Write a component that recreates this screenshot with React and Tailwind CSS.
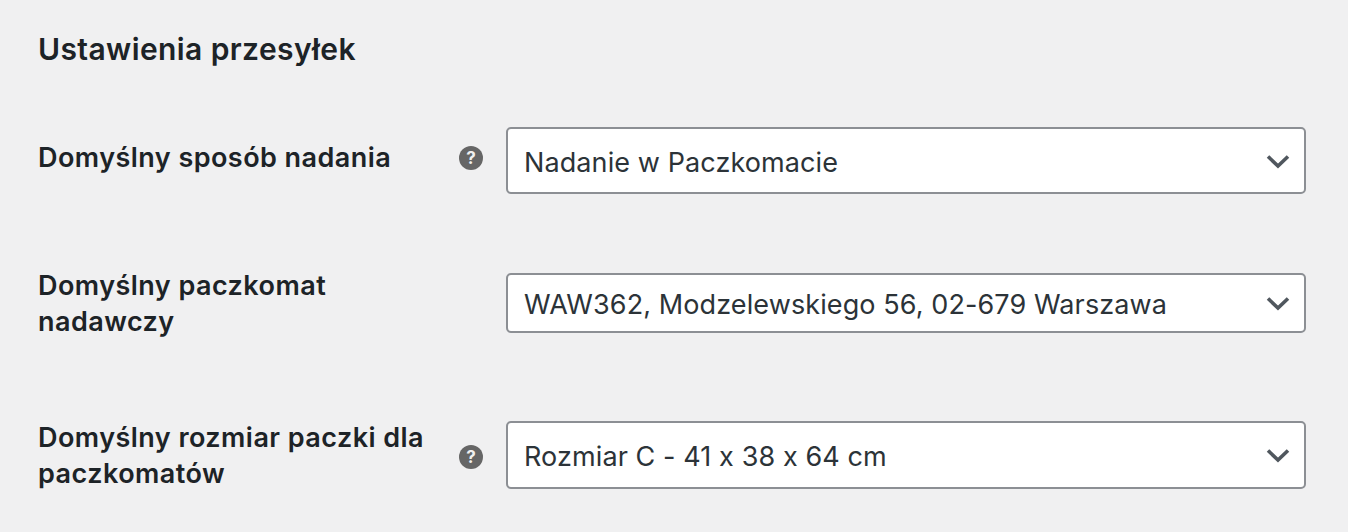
const rows = [
  {
    label: ['Domyślny sposób nadania'],
    help: true,
    value: 'Nadanie w Paczkomacie',
    rowClass: 'mt-[59px]',
    labelClass: 'mt-[13px]',
    helpClass: 'mt-[19px]',
    selectClass: 'h-[67px]',
  },
  {
    label: ['Domyślny paczkomat', 'nadawczy'],
    help: false,
    value: 'WAW362, Modzelewskiego 56, 02-679 Warszawa',
    rowClass: 'mt-[79px]',
    labelClass: '-mt-[5px]',
    helpClass: '',
    selectClass: 'h-[60px]',
  },
  {
    label: ['Domyślny rozmiar paczki dla', 'paczkomatów'],
    help: true,
    value: 'Rozmiar C - 41 x 38 x 64 cm',
    rowClass: 'mt-[81px]',
    labelClass: '-mt-px',
    helpClass: 'mt-[24px]',
    selectClass: 'h-[68px]',
  },
];

function HelpIcon({ className }) {
  return (
    <span className={`flex h-6 w-6 items-center justify-center rounded-full bg-[#666666] text-[17px] leading-none font-bold text-[#f0f0f0] ${className}`}>
      ?
    </span>
  );
}

function Chevron() {
  return (
    <svg
      className="absolute top-1/2 right-[16px] -translate-y-1/2"
      width="24"
      height="16"
      viewBox="0 0 24 16"
      fill="none"
      stroke="#50575e"
      strokeWidth="3.6"
    >
      <path d="M2 3.5 L12 13 L22 3.5" />
    </svg>
  );
}

export default function App() {
  return (
    <div className="h-[532px] w-[1348px] overflow-hidden bg-[#f0f0f1] pt-[30px] pl-[38px] font-['Inter',sans-serif] text-[#1d2327] [font-feature-settings:'calt'_0]">
      <h2 className="text-[30px] leading-[38px] font-semibold tracking-[0.4px]">Ustawienia przesyłek</h2>
      {rows.map((row) => (
        <div key={row.value} className={`flex items-start ${row.rowClass}`}>
          <div className="flex w-[468px] shrink-0 items-start">
            <div className={`w-[421px] text-[27px] leading-[36px] font-semibold tracking-[0.45px] ${row.labelClass}`}>
              {row.label.map((line) => (
                <div key={line}>{line}</div>
              ))}
            </div>
            {row.help && <HelpIcon className={row.helpClass} />}
          </div>
          <div className={`relative w-[800px] ${row.selectClass}`}>
            <select
              defaultValue={row.value}
              className="h-full w-full appearance-none rounded-[5px] border-2 border-[#8c8f94] bg-white pt-[5px] pr-12 pl-[16px] text-[27px] tracking-[0.1px] text-[#2c3338] outline-none"
            >
              <option>{row.value}</option>
            </select>
            <Chevron />
          </div>
        </div>
      ))}
    </div>
  );
}
